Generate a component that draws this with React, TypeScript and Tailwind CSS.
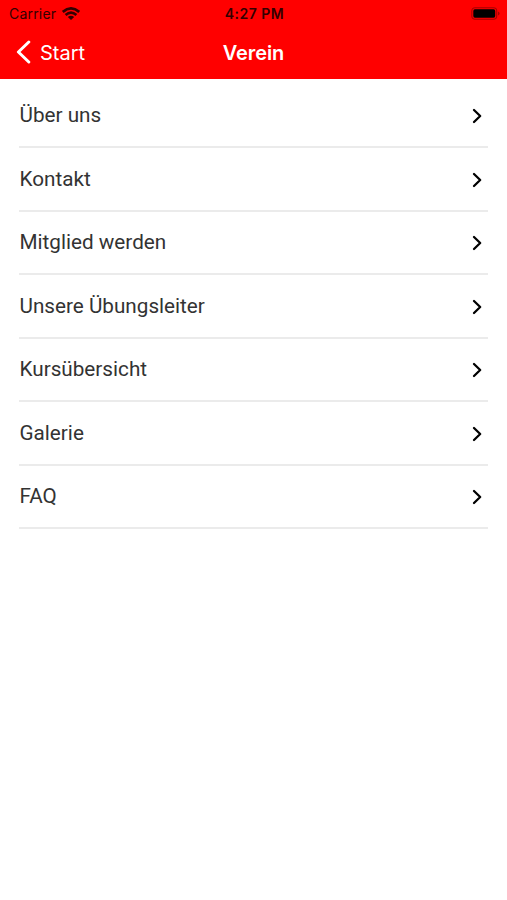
const items = [
  "Über uns",
  "Kontakt",
  "Mitglied werden",
  "Unsere Übungsleiter",
  "Kursübersicht",
  "Galerie",
  "FAQ",
];

function WifiIcon() {
  return (
    <svg className="w-[18px] h-[13px]" viewBox="0 0 18 13" fill="none" stroke="#300" strokeWidth="2.7">
      <path d="M0.8 4.9Q9 -2.1 17.2 4.9" />
      <path d="M3.6 8Q9 3.4 14.4 8" />
      <path d="M9 13L5.8 9.9Q9 7.4 12.2 9.9Z" fill="#300" stroke="none" />
    </svg>
  );
}

function BatteryIcon() {
  return (
    <svg className="w-[29px] h-[13px]" viewBox="0 0 29 13">
      <rect x="0.8" y="0.8" width="24.9" height="11.4" rx="3.2" fill="none" stroke="#a80000" strokeWidth="1.1" />
      <rect x="2.3" y="2.3" width="21.9" height="8.4" rx="1.6" fill="#000" />
      <path d="M27 4.5Q28.6 5.2 28.6 6.5T27 8.5Z" fill="#a80000" />
    </svg>
  );
}

function StatusBar() {
  return (
    <div className="h-[27px] grid grid-cols-3 items-center pl-[9px] pr-[7px] font-['Inter',sans-serif] text-[#300]">
      <div className="flex items-center gap-[6px]">
        <span className="text-[14px] leading-[20px] tracking-[0.2px]">Carrier</span>
        <WifiIcon />
      </div>
      <div className="text-center text-[14px] leading-[20px] font-semibold tracking-[0.5px]">4:27 PM</div>
      <div className="flex justify-end">
        <BatteryIcon />
      </div>
    </div>
  );
}

function NavBar() {
  return (
    <div className="h-[52px] grid grid-cols-3 items-center px-[16px] text-white font-['Inter',sans-serif]">
      <button className="flex items-center gap-[9px] text-left">
        <svg className="w-[15px] h-[24px] -mt-[2px]" viewBox="0 0 15 24" fill="none" stroke="currentColor" strokeWidth="3">
          <path d="M12.8 2L2.4 12L12.8 22" strokeLinecap="round" strokeLinejoin="round" />
        </svg>
        <span className="text-[20px]">Start</span>
      </button>
      <h1 className="text-center text-[20px] font-semibold tracking-[-0.1px]">Verein</h1>
    </div>
  );
}

export default function App() {
  return (
    <div className="min-h-screen bg-white">
      <header className="bg-[#ff0000]">
        <StatusBar />
        <NavBar />
      </header>

      <ul className="pt-[5.5px] px-[19px] font-['Roboto',sans-serif] text-[#333]">
        {items.map((item) => (
          <li key={item} className="h-[63.5px] flex items-center justify-between border-b-2 border-[#ebebeb] pr-[6px]">
            <span className="pt-px pl-[0.5px] text-[20.7px]">{item}</span>
            <svg className="w-[10px] h-[16px] mt-[2px]" viewBox="0 0 10 16" fill="none" stroke="#000" strokeWidth="2.3">
              <path d="M2 2L8.2 8L2 14" strokeLinecap="round" strokeLinejoin="round" />
            </svg>
          </li>
        ))}
      </ul>
    </div>
  );
}
